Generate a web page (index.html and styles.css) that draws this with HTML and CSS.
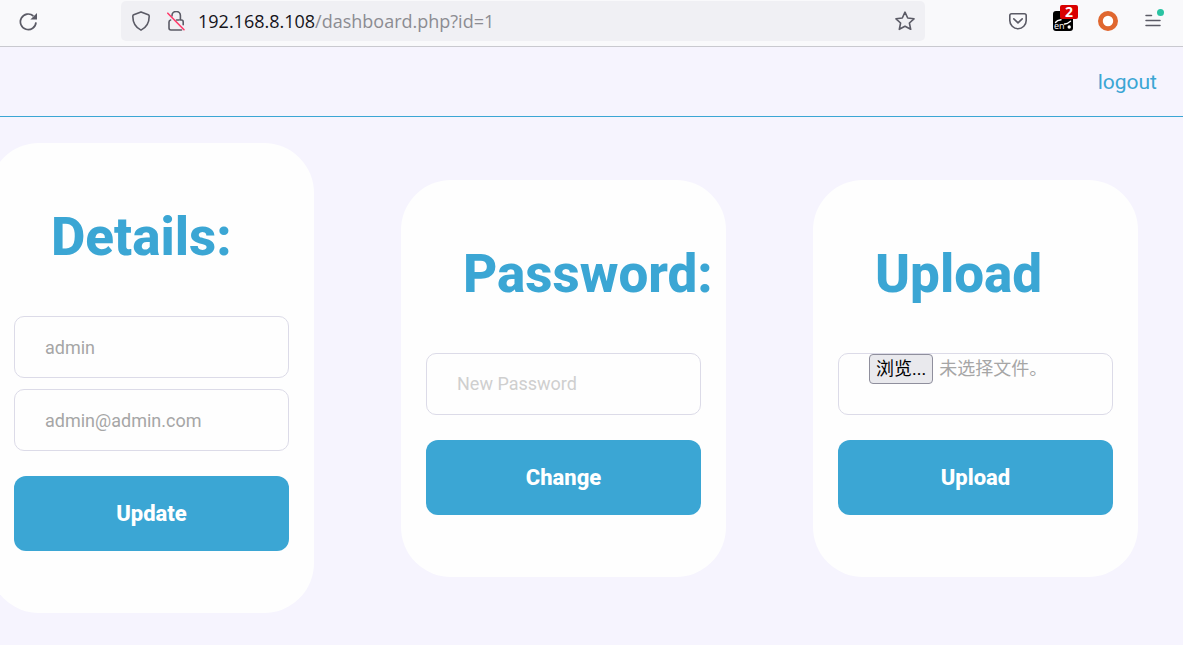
FILE: index.html
```html
<!DOCTYPE html>
<html lang="en">
<head>
    <meta charset="UTF-8">
    <meta name="viewport" content="width=device-width, initial-scale=1.0">
    <title>Dashboard</title>
    <link rel="stylesheet" href="styles.css">
</head>
<body>

    <!-- Browser toolbar -->
    <header class="toolbar">
        <button class="icon-button reload" aria-label="Reload">
            <svg width="20" height="20" viewBox="0 0 20 20" fill="none" stroke="#5b5b66" stroke-width="1.7">
                <path d="M18 11.4A7.8 7.8 0 1 1 15.4 5"/>
                <path d="M19 2V8.4H12.4Z" fill="#5b5b66" stroke="none"/>
            </svg>
        </button>

        <div class="address-bar">
            <button class="icon-button" aria-label="Tracking protection">
                <svg width="20" height="20" viewBox="0 0 20 20" fill="none" stroke="#5b5b66" stroke-width="1.6" stroke-linejoin="round">
                    <path d="M10 .9L17.3 3.8Q18.2 4.2 18.2 5.2C18.2 11 16.2 16 10 19.1C3.8 16 1.8 11 1.8 5.2Q1.8 4.2 2.7 3.8Z"/>
                </svg>
            </button>
            <button class="icon-button" aria-label="Connection not secure">
                <svg width="20" height="20" viewBox="0 0 20 20" fill="none" stroke="#5b5b66" stroke-width="1.6" stroke-linecap="round" stroke-linejoin="round">
                    <path d="M6 5V4.6A4.2 4.2 0 0 1 14.4 4.6V9H15.4Q17.2 9 17.2 11V13.8M10.5 9H13"/>
                    <path d="M4.6 9Q3 9.3 3 11V17Q3 19 5 19H15.5"/>
                    <path d="M1.8 2.2L18 18.7" stroke="#ff3b6b"/>
                </svg>
            </button>
            <div class="url" role="textbox" aria-label="Address" contenteditable="true" spellcheck="false"><span class="host">192.168.8.108</span>/dashboard.php?id=1</div>
            <button class="icon-button" aria-label="Bookmark this page">
                <svg width="20" height="20" viewBox="0 0 20 20" fill="none" stroke="#5b5b66" stroke-width="1.6" stroke-linejoin="round">
                    <path d="M10 1.2L12.7 7L19 7.8L14.4 12L15.7 18.3L10 15.2L4.3 18.3L5.6 12L1 7.8L7.3 7Z"/>
                </svg>
            </button>
        </div>

        <div class="extensions">
            <button class="icon-button" aria-label="Save to Pocket">
                <svg width="20" height="20" viewBox="0 0 20 20" fill="none" stroke="#5b5b66" stroke-width="1.6" stroke-linecap="round" stroke-linejoin="round">
                    <path d="M3.6 2.7H16.4Q18.2 2.7 18.2 4.5V9.5A8.2 8.2 0 0 1 1.8 9.5V4.5Q1.8 2.7 3.6 2.7Z"/>
                    <path d="M5.8 7.8L10 11.8L14.2 7.8"/>
                </svg>
            </button>
            <button class="icon-button" aria-label="Translate extension">
                <svg class="translate" width="20" height="20" viewBox="0 0 20 20" fill="none" stroke="#fff" stroke-width="1.4" stroke-linecap="round">
                    <rect width="20" height="20" rx="3" fill="#000" stroke="none"/>
                    <path d="M2.5 11.5Q4 9.3 8 8.8M11.5 13Q14 13.2 17.5 10.3"/>
                    <circle cx="16.2" cy="16" r="1.7" fill="#fff" stroke="none"/>
                    <text x="1" y="18" class="lang">en</text>
                </svg>
                <span class="badge">2</span>
            </button>
            <button class="icon-button" aria-label="Container extension">
                <svg width="20" height="20" viewBox="0 0 20 20">
                    <circle cx="10" cy="10" r="7.6" fill="#fff" stroke="#e0672f" stroke-width="4.8"/>
                </svg>
            </button>
            <button class="icon-button" aria-label="Menu">
                <svg width="20" height="20" viewBox="0 0 20 20" fill="none" stroke="#5b5b66" stroke-width="1.5" stroke-linecap="round">
                    <path d="M3 4.5H8.5M3 9.5H17M3 14.5H17"/>
                </svg>
                <span class="update-dot"></span>
            </button>
        </div>
    </header>

    <nav class="navbar">
        <a href="logout.php">logout</a>
    </nav>

    <main class="cards">
        <form class="card">
            <h1>Details:</h1>
            <input class="field" type="text" name="username" aria-label="Username" value="admin">
            <input class="field" type="text" name="email" aria-label="Email" value="admin@admin.com">
            <button class="submit" type="submit">Update</button>
        </form>

        <form class="card">
            <h1>Password:</h1>
            <input class="field" type="password" name="password" aria-label="New Password" placeholder="New Password">
            <button class="submit" type="submit">Change</button>
        </form>

        <form class="card">
            <h1>Upload</h1>
            <label class="field file-field" lang="zh-CN">
                <input type="file" name="upload">
                <span class="browse">浏览...</span>
                <span>未选择文件。</span>
            </label>
            <button class="submit" type="submit">Upload</button>
        </form>
    </main>

</body>
</html>
```
FILE: styles.css
```css
:root {
    --accent: #3ba6d4;
    --page-bg: #f6f4fe;
    --field-border: #dcdbe8;
    --field-text: #a6a6a6;
}

* {
    box-sizing: border-box;
}

body {
    margin: 0;
    min-height: 100vh;
    display: flex;
    flex-direction: column;
    background: var(--page-bg);
    font-family: Roboto, "Noto Sans CJK SC", sans-serif;
}

button {
    font-family: inherit;
    cursor: pointer;
}

/* Browser toolbar */
.toolbar {
    display: flex;
    align-items: center;
    height: 47px;
    padding: 0 20px 4px 18px;
    background: #f9f9fb;
    border-bottom: 1px solid #c9c9cf;
}

.icon-button {
    position: relative;
    flex: none;
    width: 20px;
    height: 20px;
    padding: 0;
    border: none;
    background: none;
}

.icon-button svg {
    display: block;
}

.icon-button .translate {
    overflow: visible;
}

.reload {
    margin-right: 83px;
}

.address-bar {
    flex: 1;
    display: flex;
    align-items: center;
    gap: 15px;
    height: 40px;
    margin-right: 83px;
    padding: 0 10px;
    border-radius: 5px;
    background: #f0f0f4;
}

.url {
    flex: 1;
    margin-left: -3px;
    font-family: "Open Sans", "Noto Sans", sans-serif;
    font-size: 18px;
    line-height: 26px;
    white-space: nowrap;
    overflow: hidden;
    color: #8c8c92;
    outline: none;
}

.host {
    color: #15141a;
}

.extensions {
    display: flex;
    gap: 25px;
}

.lang {
    fill: #fff;
    stroke: none;
    font-family: "Open Sans", sans-serif;
    font-size: 9px;
}

.badge {
    position: absolute;
    top: -6px;
    right: -5px;
    width: 18px;
    height: 14px;
    border-radius: 2px;
    background: #d90000;
    color: #fff;
    font-family: "Open Sans", sans-serif;
    font-size: 14px;
    font-weight: 700;
    line-height: 14px;
}

.update-dot {
    position: absolute;
    top: -2px;
    right: -1px;
    width: 7px;
    height: 7px;
    border-radius: 50%;
    background: #2ac3a2;
}

/* Page */
.navbar {
    display: flex;
    justify-content: flex-end;
    align-items: center;
    height: 70px;
    padding: 0 26px;
    border-bottom: 1px solid var(--accent);
}

.navbar a {
    color: var(--accent);
    font-size: 21px;
    text-decoration: none;
}

.cards {
    display: flex;
    justify-content: flex-end;
    align-items: center;
    gap: 87px;
    padding: 26px 45px 32px;
}

.card {
    flex: none;
    display: flex;
    flex-direction: column;
    width: 325px;
    padding: 63px 25px 62px;
    border-radius: 50px;
    background: #fefefe;
}

.card h1 {
    margin: 0 0 47px;
    padding-left: 37px;
    color: var(--accent);
    font-size: 53px;
    font-weight: 800;
    line-height: 63px;
    white-space: nowrap;
}

.field {
    width: 100%;
    height: 62px;
    padding: 0 30px;
    border: 1px solid var(--field-border);
    border-radius: 10px;
    background: #fefefe;
    color: var(--field-text);
    font-family: inherit;
    font-size: 18px;
}

.field + .field {
    margin-top: 11px;
}

.field::placeholder {
    color: #cfcfcf;
}

.file-field {
    display: flex;
    align-items: flex-start;
    gap: 6px;
    line-height: 30px;
    white-space: nowrap;
    cursor: pointer;
}

/* the label draws the control, the input stays reachable by keyboard */
.file-field input {
    position: absolute;
    width: 1px;
    height: 1px;
    opacity: 0;
}

.browse {
    padding: 0 6px;
    border: 1px solid #8f8f9d;
    border-radius: 4px;
    background: #e9e9ed;
    color: #000;
    line-height: 28px;
}

.submit {
    height: 75px;
    margin-top: 25px;
    border: none;
    border-radius: 12px;
    background: var(--accent);
    color: #fff;
    font-size: 22px;
    font-weight: 800;
}
```
